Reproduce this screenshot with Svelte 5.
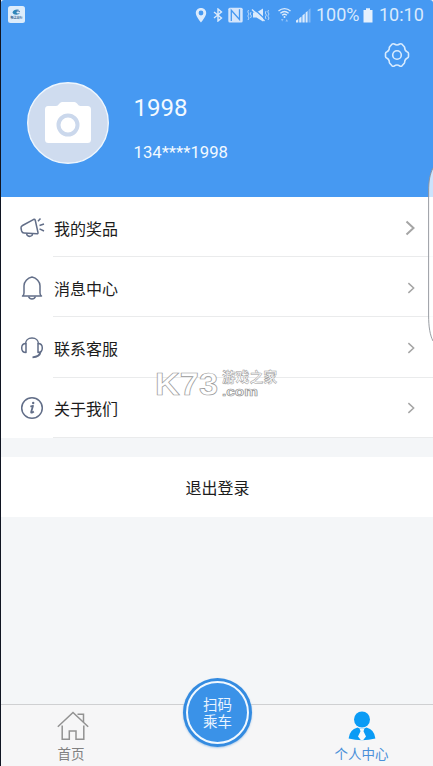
<script lang="ts">
  type MenuIcon = "prize" | "bell" | "service" | "about";

  type MenuItem = {
    label: string;
    icon: MenuIcon;
  }

  const menu: MenuItem[] = [
    { label: "我的奖品", icon: "prize" },
    { label: "消息中心", icon: "bell" },
    { label: "联系客服", icon: "service" },
    { label: "关于我们", icon: "about" }
  ];

  const user = { name: "1998", phone: "134****1998" };
</script>

<div class="screen">
  <header>
    <div class="status">
      <svg class="app-badge" width="17" height="17" viewBox="0 0 17 17">
        <rect width="17" height="17" rx="2.5" fill="#dcecfb" />
        <path d="M4.500 6.500C5 3.500 10 2.500 12 4.500C9.500 4 8 5 8.500 6.500C9 8 11 7.500 12 6.500C11 9.500 5.500 9.500 4.500 6.500Z" fill="#2f86b8" />
        <path d="M8 5.500C9 4.500 11.500 5 12 6" stroke="#3b6fa8" fill="none" />
        <text x="8.500" y="12.800" text-anchor="middle" font-size="3" font-weight="700" fill="#35608c">畅达出行</text>
      </svg>
      <div class="indicators">
        <svg class="pin" width="12" height="16" viewBox="0 0 12 16">
          <path fill-rule="evenodd" d="M6 1C2.900 1 .8 3.200.8 6C.8 9.500 6 15.500 6 15.500S11.200 9.500 11.200 6C11.200 3.200 9.100 1 6 1ZM6 3.600A2.400 2.400 0 1 1 6 8.400A2.400 2.400 0 1 1 6 3.600Z" fill="#dcebfc" />
        </svg>
        <svg class="bt" width="10" height="14" viewBox="0 0 10 14">
          <path d="M1 4L8.500 10L5 13V1L8.500 4L1 10" fill="none" stroke="#dcebfc" stroke-width="1.400" />
        </svg>
        <svg class="nfc" width="15" height="16" viewBox="0 0 15 16">
          <rect x=".3" y=".8" width="14.400" height="14.600" rx="1.500" fill="#d3e5fc" />
          <path d="M3.300 14V3.300L11.500 12.500V2.200" fill="none" stroke="#4699f2" stroke-width="1.300" />
        </svg>
        <svg class="mute" width="23" height="16" viewBox="0 0 23 16">
          <path d="M6 5.500H9.500L16 1.500V14.500L9.500 10.500H6Z" fill="#dcebfc" />
          <path d="M6.500 1.500L19 13" stroke="#4699f2" stroke-width="1.300" />
          <path d="M5 2.500L17.500 14" stroke="#dcebfc" stroke-width="1.500" />
          <path d="M1.500 3L.8 5L2 7L.8 9L2 11L1 13M4 5L3.300 7L4.400 9L3.500 11M19 4L18.300 6L19.400 8L18.300 10L19 12M21.500 3L20.800 5L22 7L20.800 9L22 11L21 13" fill="none" stroke="#b9d8f9" />
        </svg>
        <svg class="wifi" width="13" height="16" viewBox="0 0 13 16">
          <path d="M.5 4C4 .8 9 .8 12.500 4M2.400 6.200C5 4 8 4 10.600 6.200M4.100 8.300C5.600 7 7.400 7 8.900 8.300" fill="none" stroke="#dcebfc" stroke-width="1.300" />
          <circle cx="6.500" cy="10" r="1" fill="#dcebfc" />
          <path d="M3 12H5.500L4.200 14.500ZM7.500 14.500H10L8.800 12Z" fill="#92c2f7" />
        </svg>
        <svg class="signal" width="15" height="15" viewBox="0 0 15 15">
          <path d="M0 14.500V12.500L2.300 11V14.500ZM3.200 14.500V10.300L5.500 8.500V14.500ZM6.400 14.500V7.500L8.700 5.500V14.500ZM9.600 14.500V4.500L11.600 3V14.500Z" fill="#dcebfc" />
          <path d="M12.500 14.500V2L14.500 .3V14.500Z" fill="#84baf6" />
        </svg>
        <span class="percent">100%</span>
        <svg class="battery" width="10" height="15" viewBox="0 0 10 15">
          <path d="M3 .3H7V2H9.500V14.500H.5V2H3Z" fill="#e6f1fd" />
        </svg>
        <span class="time">10:10</span>
      </div>
    </div>

    <svg class="settings" width="26" height="26" viewBox="0 0 26 26" fill="none" stroke="#d8ebfe" stroke-width="1.600">
      <path d="M8 2.200Q9 1.300 10.200 2Q13 3.900 15.800 2Q17 1.300 18 2.200L20.300 4.800Q20.800 5.500 20.800 7Q21.200 8.800 23 9.700Q24.500 10.300 24.500 11.500V14.500Q24.500 15.700 23 16.300Q21.200 17.200 20.800 19Q20.800 20.500 20.300 21.200L18 23.800Q17 24.700 15.800 24Q13 22.100 10.200 24Q9 24.700 8 23.800L5.700 21.200Q5.200 20.500 5.200 19Q4.800 17.200 3 16.300Q1.500 15.700 1.500 14.500V11.500Q1.500 10.300 3 9.700Q4.800 8.800 5.200 7Q5.200 5.500 5.700 4.800Z" />
      <circle cx="13" cy="13" r="4.300" />
    </svg>

    <div class="profile">
      <svg class="avatar" width="82" height="82" viewBox="0 0 82 82">
        <circle cx="41" cy="41" r="40.300" fill="#cfdcef" stroke="#eef6fe" stroke-width="1.400" />
        <path d="M21 24H29Q31 24 32 22L32.500 21.500Q33.500 20 35 20H47.500Q49 20 50 21.500L50.500 22Q51.500 24 53.500 24H60.500Q64 24 64 27.500V57.500Q64 61 60.500 61H21.500Q18 61 18 57.500V27.500Q18 24 21 24Z" fill="#fff" />
        <circle cx="41" cy="43" r="9.500" fill="none" stroke="#cbd8ec" stroke-width="4" />
      </svg>
      <div class="info">
        <div class="name">{user.name}</div>
        <div class="phone">{user.phone}</div>
      </div>
    </div>
  </header>

  <nav class="menu">
    {#each menu as item, i}
      <div class="row">
        <svg class="icon" width="26" height="26" viewBox="0 0 26 26" fill="none" stroke="#626e88" stroke-width="1.500" stroke-linejoin="round">
          {#if item.icon === "prize"}
            <path d="M3.500 10.500L14.800 4.300Q15.800 4 16.200 5L19 17.500Q19.200 18.700 18 18.700L5 18Q3.200 18 2.600 16L2 13Q1.800 11.500 3.500 10.500Z" />
            <path d="M7.500 18.300L8 20Q10 22.500 13 20.500L13.500 18.700" />
            <path d="M19 6.300L21.500 3.500M20.500 10.500L25 9M20.500 13.800L25 16" />
          {:else if item.icon === "bell"}
            <path d="M3.500 21H22.500Q21 20 21 18V10.800C21 6.500 17.500 3 13 2C8.500 3 5 6.500 5 10.800V18Q5 20 3.500 21Z" />
            <path d="M9.500 21.500Q10.500 24 13 24T16.500 21.500" />
          {:else if item.icon === "service"}
            <path d="M6.500 9C6.500 5.500 9 3 13 3S19.500 5.500 19.500 9" />
            <path d="M7 8.500V17.500C4 17.500 2.700 15.500 2.700 13S4 8.500 7 8.500ZM19 8.500V17.500C22 17.500 23.300 15.500 23.300 13S22 8.500 19 8.500Z" />
            <path d="M21.500 17C21 20 18 22 13.500 22.300" stroke-width="1.800" />
          {:else}
            <circle cx="13" cy="13" r="10.300" />
            <path d="M11.300 11.500L14 10.800L12.200 17Q12 18.500 14.800 16.500" stroke-width="1.800" />
            <circle cx="14.200" cy="8" r="1.200" fill="#626e88" stroke="none" />
          {/if}
        </svg>
        <div class="cell">
          <span>{item.label}</span>
          <svg class="chevron" class:large={i === 0} viewBox="0 0 10 16">
            <path d="M1.500 1.500L8.500 8L1.500 14.500" fill="none" stroke="#a5a5a5" stroke-width="2" />
          </svg>
        </div>
      </div>
    {/each}
  </nav>

  <div class="logout">退出登录</div>

  <footer>
    <div class="tab home">
      <svg width="32" height="30" viewBox="0 0 32 30" fill="none" stroke="#929292" stroke-width="1.500">
        <path d="M.8 15.800L16 1.500L31.200 15.800" />
        <path d="M20.500 3.300H26.500V11M5.200 14.500V28.300H12.300V20H19V28.300H26.800V14.500" />
      </svg>
      <span>首页</span>
    </div>
    <div class="scan">
      <div class="ring">扫码<br />乘车</div>
    </div>
    <div class="tab mine">
      <svg width="28" height="30" viewBox="0 0 28 30">
        <circle cx="14" cy="8.500" r="8" fill="#0a9bf5" />
        <path d="M.6 27.500Q1.500 18.500 9.500 16.500Q14 19 18.500 16.500Q26.500 18.500 27.400 27.500Q14 31 .6 27.500Z" fill="#0a9bf5" />
        <path d="M11.500 17.200Q14 18.300 16.500 17.200L15.500 20.200L18 25.500L15 29.300H13L10 25.500L12.500 20.200Z" fill="#f7f9fb" />
      </svg>
      <span>个人中心</span>
    </div>
  </footer>

  <svg class="edge" width="5" height="176" viewBox="0 0 5 176">
    <path d="M5 1C2 7 .6 14 .6 24V148C.6 160 2 168 5 174Z" fill="#fff" fill-opacity=".72" />
    <path d="M5 1C2 7 .6 14 .6 24V148C.6 160 2 168 5 174" fill="none" stroke="#8d9298" stroke-width=".9" />
  </svg>

  <svg class="watermark" width="130" height="44" viewBox="0 0 130 44" fill="#fff" stroke="#999" stroke-width=".7">
    <text x="1" y="31.500" font-size="32" textLength="63" lengthAdjust="spacingAndGlyphs" font-weight="700">K73</text>
    <text class="cn" x="68" y="19" font-size="13.500" textLength="55">游戏之家</text>
    <text x="68" y="33" font-size="12.500" textLength="36" lengthAdjust="spacingAndGlyphs" font-weight="700">.com</text>
  </svg>
</div>

<style>
  :global(body) {
    margin: 0;
    background: #101522;
  }

  .screen {
    position: relative;
    box-sizing: border-box;
    display: flex;
    flex-direction: column;
    width: 433px;
    height: 766px;
    padding-left: 1px;
    overflow: hidden;
    background: linear-gradient(90deg, #101522 1px, #f4f6f8 1px);
    font-family: Roboto, "Noto Sans CJK SC", sans-serif;
    color: #1c1c1c;
  }

  svg {
    display: block;
    flex: none;
  }

  header {
    display: flex;
    flex-direction: column;
    flex: none;
    height: 197px;
    background: #4699f2;
    border-radius: 3px 3px 0 0;
  }

  .status {
    display: flex;
    align-items: center;
    justify-content: space-between;
    height: 30px;
    padding: 0 8px 0 7px;
  }

  .app-badge {
    margin-top: -1px;
  }

  .indicators {
    display: flex;
    align-items: center;
    color: #d9eafd;
    font-size: 18px;
    line-height: 30px;
    white-space: nowrap;
  }

  .bt {
    margin-left: 6px;
  }

  .nfc {
    margin-left: 5px;
  }

  .mute {
    margin-left: 4px;
  }

  .wifi {
    margin-left: 8px;
  }

  .signal {
    margin-left: 5px;
  }

  .percent {
    width: 44px;
    margin-left: 5px;
  }

  .battery {
    margin-left: 3px;
  }

  .time {
    width: 46px;
    margin-left: 6px;
  }

  .settings {
    align-self: flex-end;
    margin: 12px 23px 0 0;
  }

  .profile {
    display: flex;
    margin: 14px 0 0 26px;
  }

  .info {
    margin-left: 24.500px;
    color: #f3f9ff;
  }

  .name {
    margin-top: 11px;
    font-size: 24px;
    line-height: 30px;
  }

  .phone {
    margin-top: 20px;
    font-size: 16.700px;
    line-height: 20px;
  }

  .menu {
    flex: none;
    height: 241px;
    background: #fff;
  }

  .row {
    display: flex;
    align-items: center;
    height: 60.200px;
    padding-left: 18px;
  }

  .icon {
    margin-top: 1px;
  }

  .cell {
    box-sizing: border-box;
    display: flex;
    flex: 1;
    align-items: center;
    justify-content: space-between;
    height: 100%;
    margin-left: 8px;
    padding: 2px 18px 0 1px;
    border-bottom: 1px solid #eaebec;
    font-size: 16px;
  }

  .chevron {
    width: 8px;
    height: 12px;
  }

  .large {
    width: 10px;
    height: 16px;
  }

  .logout {
    flex: none;
    height: 60px;
    margin-top: 19px;
    background: #fff;
    font-size: 16px;
    line-height: 63px;
    text-align: center;
    text-indent: 1px;
  }

  footer {
    box-sizing: border-box;
    display: flex;
    justify-content: space-between;
    height: 62px;
    margin-top: auto;
    border-top: 1px solid #cfd0d2;
    background: #f6f6f7;
  }

  .tab {
    display: flex;
    flex-direction: column;
    align-items: center;
    width: 144px;
    padding-top: 6px;
    box-sizing: border-box;
    font-size: 13.500px;
    line-height: 20px;
  }

  .tab span {
    margin-top: 3px;
  }

  .home {
    padding-right: 4px;
    color: #818181;
  }

  .home svg {
    margin-left: 4px;
  }

  .mine {
    padding-left: 1px;
    color: #4a90d9;
  }

  .scan {
    display: flex;
    flex: none;
    align-items: center;
    justify-content: center;
    width: 69px;
    height: 69px;
    margin-top: -27px;
    border-radius: 50%;
    background: #348be0;
    box-shadow: 0 1px 2px #a9c9ea;
  }

  .ring {
    box-sizing: border-box;
    width: 63px;
    height: 63px;
    padding: 15px 0 0 1px;
    border: 2px solid #f0f8ff;
    border-radius: 50%;
    background: #3a92e8;
    color: #e9f4ff;
    font-size: 14.500px;
    line-height: 16.500px;
    text-align: center;
  }

  .edge {
    position: absolute;
    top: 167px;
    right: 0;
  }

  .watermark {
    position: absolute;
    top: 363px;
    left: 154px;
    font-family: "Liberation Sans", sans-serif;
  }

  .cn {
    font-family: "Noto Sans CJK SC", sans-serif;
    font-weight: 700;
    stroke-width: .5;
  }
</style>
